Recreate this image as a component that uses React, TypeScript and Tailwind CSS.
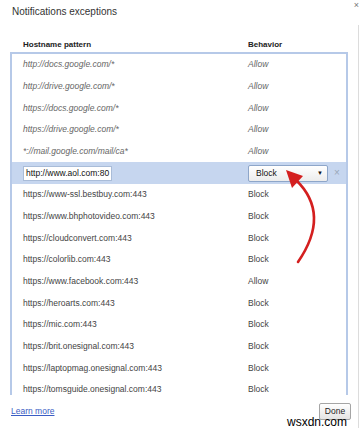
import React from "react";

type Row = { host: string; behavior: string; italic?: boolean; selected?: boolean };

const rows: Row[] = [
  { host: "http://docs.google.com/*", behavior: "Allow", italic: true },
  { host: "http://drive.google.com/*", behavior: "Allow", italic: true },
  { host: "https://docs.google.com/*", behavior: "Allow", italic: true },
  { host: "https://drive.google.com/*", behavior: "Allow", italic: true },
  { host: "*://mail.google.com/mail/ca*", behavior: "Allow", italic: true },
  { host: "http://www.aol.com:80", behavior: "Block", selected: true },
  { host: "https://www-ssl.bestbuy.com:443", behavior: "Block" },
  { host: "https://www.bhphotovideo.com:443", behavior: "Block" },
  { host: "https://cloudconvert.com:443", behavior: "Block" },
  { host: "https://colorlib.com:443", behavior: "Block" },
  { host: "https://www.facebook.com:443", behavior: "Allow" },
  { host: "https://heroarts.com:443", behavior: "Block" },
  { host: "https://mic.com:443", behavior: "Block" },
  { host: "https://brit.onesignal.com:443", behavior: "Block" },
  { host: "https://laptopmag.onesignal.com:443", behavior: "Block" },
  { host: "https://tomsguide.onesignal.com:443", behavior: "Block" },
];

export default function App() {
  return (
    <div className="relative w-[360px] h-[428px] overflow-hidden bg-white font-['Liberation_Sans',Arial,sans-serif] text-[#333]">
      <div className="pl-[12px] pt-[6px] text-[10px] leading-[12px] text-[#333]">Notifications exceptions</div>
      <div className="absolute right-[1px] top-[-1px] text-[9px] leading-[12px] text-[#777]">×</div>

      <div className="mt-[22px] flex pl-[23px] text-[8px] font-bold leading-[10px] text-[#222]">
        <div className="w-[225px]">Hostname pattern</div>
        <div>Behavior</div>
      </div>

      <div className="mx-[10px] mt-[2px] h-[343px] w-[338px] overflow-hidden border-2 border-b-0 border-[#b6c9e8]">
        {rows.map((r, i) =>
          r.selected ? (
            <div key={i} className="flex h-[21.67px] items-center bg-[#c6d6ef] pl-[11px] text-[8.5px] text-[#111]">
              <div className="w-[225px]">
                <div className="flex h-[15px] w-[89px] items-center border border-[#a9bcd8] bg-white pl-[2px]">{r.host}</div>
              </div>
              <div className="flex h-[17px] w-[80px] items-center justify-between rounded-[2px] border border-[#8ea6c9] bg-gradient-to-b from-white to-[#ececec] pl-[7px] pr-[4px]">
                <span>{r.behavior}</span>
                <span className="text-[6px] text-[#111]">▼</span>
              </div>
              <div className="ml-[6px] text-[10px] leading-[10px] text-[#9aa7b8]">×</div>
            </div>
          ) : (
            <div
              key={i}
              className={`flex h-[21.67px] items-center pl-[11px] text-[8.5px] ${r.italic ? "italic text-[#666]" : "text-[#444]"}`}
            >
              <div className="w-[225px]">{r.host}</div>
              <div>{r.behavior}</div>
            </div>
          )
        )}
      </div>

      <div className="mt-[8px] flex h-[17px] items-center justify-between pl-[11px] pr-[9px]">
        <span className="text-[8.5px] text-[#3a5cc4] underline">Learn more</span>
        <div className="flex h-[17px] w-[32px] items-center justify-center rounded-[2px] border border-[#a5a5a5] bg-gradient-to-b from-white to-[#e4e4e4] text-[8.5px] text-[#222]">
          Done
        </div>
      </div>

      <div className="absolute left-[358px] top-[25px] h-[403px] w-[1px] bg-[#dcdcdc]" />

      <svg className="absolute left-0 top-0" width="360" height="428" viewBox="0 0 360 428">
        <path d="M298 262 Q 331 214 296 180" fill="none" stroke="#d41f1f" strokeWidth="2.6" strokeLinecap="round" />
        <polygon points="286,170 303,176 292,188" fill="#d41f1f" />
      </svg>

      <div className="absolute left-[287px] top-[415px] text-[12px] leading-[14px] text-black">wsxdn.com</div>
    </div>
  );
}
